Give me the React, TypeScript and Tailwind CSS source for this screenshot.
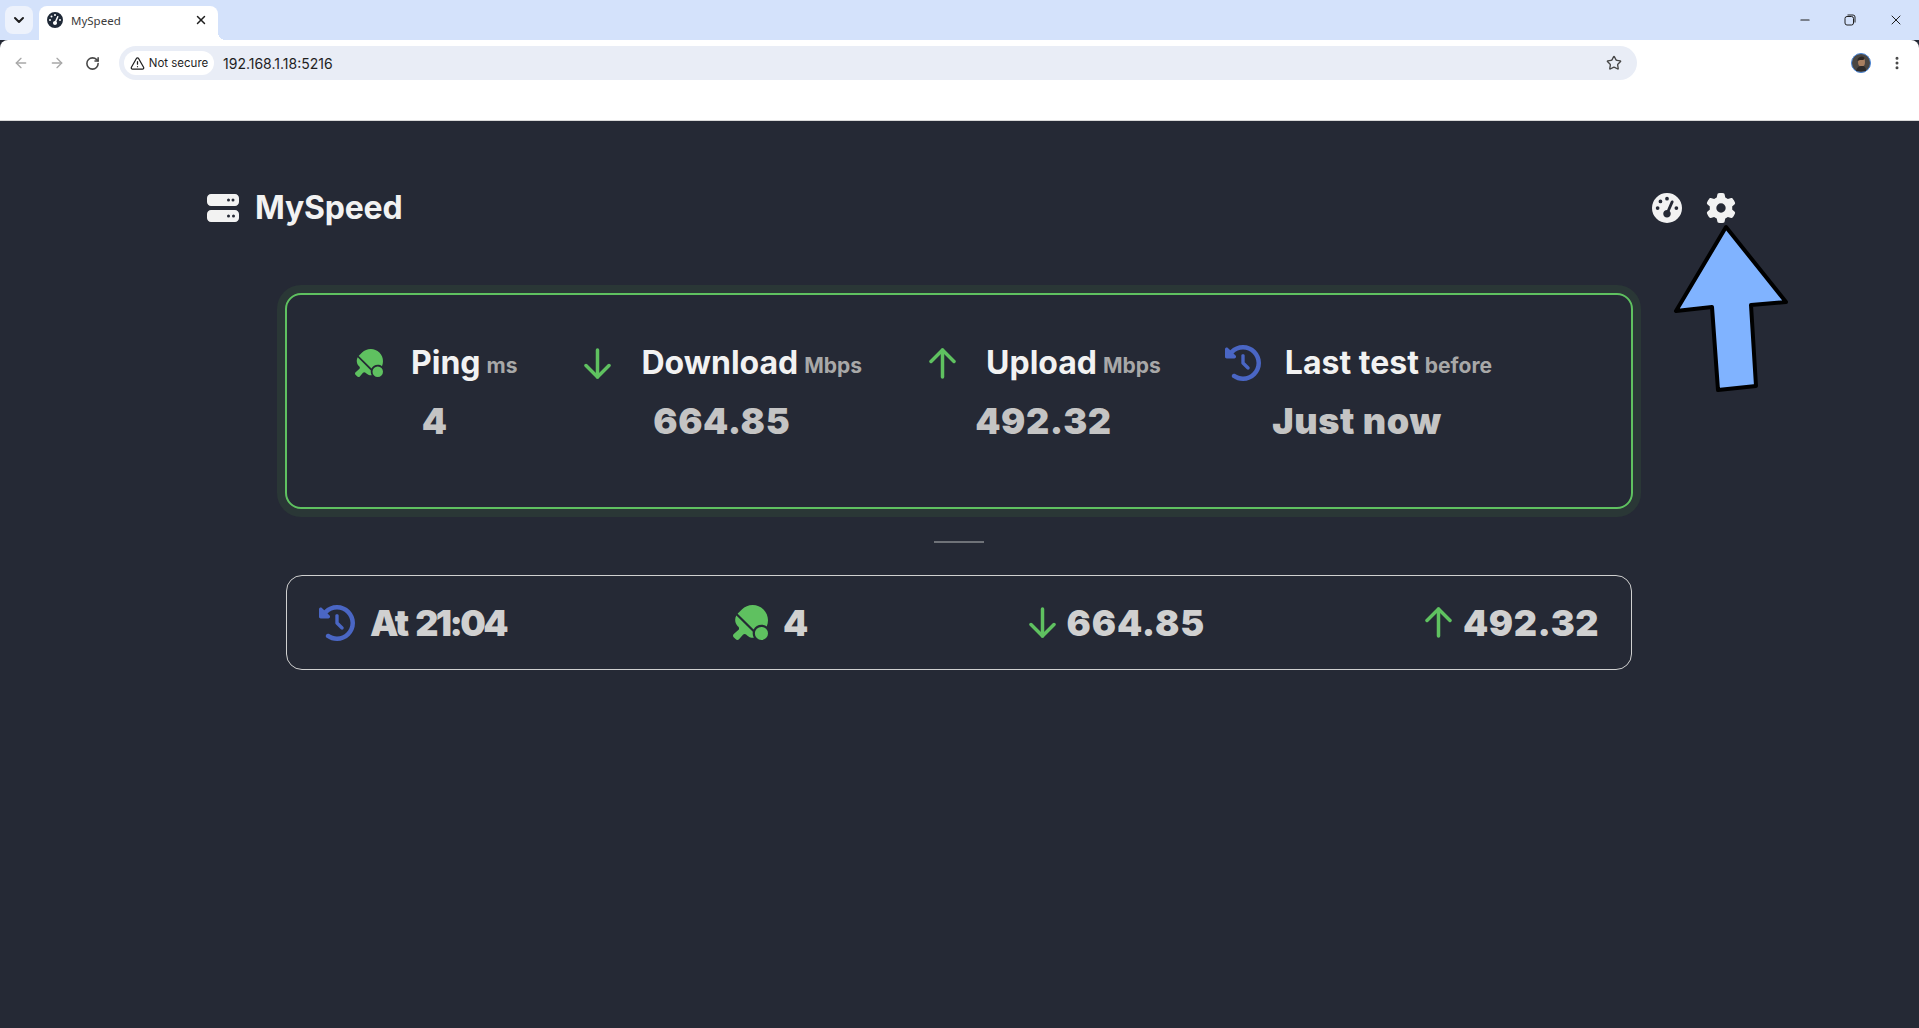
import { ChevronDown, X, ArrowLeft, ArrowRight, RotateCw, TriangleAlert, Star, Minus, EllipsisVertical } from "lucide-react";
import { FaServer, FaGear, FaClockRotateLeft, FaGaugeHigh, FaTableTennisPaddleBall } from "react-icons/fa6";

const stats = [
  { id: "ping", label: "Ping", unit: "ms", value: "4", gap: "ml-[28px]", shift: "" },
  { id: "down", label: "Download", unit: "Mbps", value: "664.85", gap: "ml-[30px]", shift: "" },
  { id: "up", label: "Upload", unit: "Mbps", value: "492.32", gap: "ml-[30px]", shift: "" },
  { id: "last", label: "Last test", unit: "before", value: "Just now", gap: "ml-[24px]", shift: "-ml-[3px]" },
];

function SpeedArrow({ up }: { up?: boolean }) {
  return (
    <svg width="27" height="31" viewBox="0 0 27 31" fill="none" stroke="#5fc160" strokeWidth="3.5" strokeLinecap="round" strokeLinejoin="round" className={up ? "rotate-180" : ""}>
      <path d="M13.5 2V29" />
      <path d="M2 17.5L13.5 29L25 17.5" />
    </svg>
  );
}

function StatIcon({ id, small }: { id: string; small?: boolean }) {
  if (id === "ping") return <FaTableTennisPaddleBall className={small ? "text-[#5fc160] text-[35px]" : "text-[#5fc160] text-[28px]"} />;
  if (id === "down") return <SpeedArrow />;
  if (id === "up") return <SpeedArrow up />;
  return <FaClockRotateLeft className="text-[#4a66c4] text-[36px]" />;
}

export default function App() {
  return (
    <div className="relative w-[1919px] h-[1028px] overflow-hidden bg-[#252935] font-['Inter',sans-serif]">
      {/* Browser chrome */}
      <div className="bg-[#d4e2fb] h-[40px] flex items-start pl-[5px] font-['Noto_Sans',sans-serif]">
        <div className="mt-[6px] w-[28px] h-[28px] rounded-lg bg-[#edf2fc] flex items-center justify-center">
          <ChevronDown size={16} strokeWidth={3} className="text-[#1f1f1f]" />
        </div>
        <div className="relative ml-[6px] mt-[6px] w-[179px] h-[34px] bg-white rounded-t-lg flex items-center pl-[8px] pr-[10px] pb-[6px]">
          <FaGaugeHigh className="text-[#1f2937] text-[16px]" />
          <span className="ml-[8px] mt-[2px] text-[11.5px] text-[#3c3c3c]">MySpeed</span>
          <X size={14} strokeWidth={2.5} className="ml-auto text-[#1f1f1f]" />
          <div className="absolute left-full bottom-0 w-[8px] h-[8px] bg-[radial-gradient(circle_at_100%_0,transparent_8px,white_8px)]" />
        </div>
        <div className="ml-auto flex items-center h-[40px] pr-[15px] gap-[32px] text-[#1f1f1f]">
          <Minus size={14} />
          <svg width="12" height="12" viewBox="0 0 12 12" fill="none" stroke="#1f1f1f" strokeWidth="1">
            <rect x="1" y="2.5" width="8.5" height="8.5" rx="2" />
            <path d="M3.5 1H9a2 2 0 0 1 2 2V8.5" />
          </svg>
          <X size={16} strokeWidth={1.5} />
        </div>
      </div>
      <div className="bg-white h-[81px] rounded-t-lg border-b border-[#d8d8d8]">
        <div className="flex items-center h-[46px]">
          <div className="flex items-center gap-[20px] pl-[13px] w-[119px]">
            <ArrowLeft size={16} className="text-[#a8a8a8]" />
            <ArrowRight size={16} className="text-[#a8a8a8]" />
            <RotateCw size={15} strokeWidth={2.5} className="text-[#474747]" />
          </div>
          <div className="w-[1518px] h-[34px] rounded-full bg-[#e9edf6] flex items-center pl-[5px] pr-[15px]">
            <div className="h-[24px] w-[90px] bg-white rounded-full flex items-center justify-center gap-[4px] text-[#1f1f1f]">
              <TriangleAlert size={15} strokeWidth={2} />
              <span className="mt-[1px] text-[11.5px]">Not secure</span>
            </div>
            <span className="ml-[9px] mt-[1px] text-[14px] text-[#1f1f1f]">192.168.1.18:5216</span>
            <Star size={16} strokeWidth={2} className="ml-auto text-[#474747]" />
          </div>
          <svg width="20" height="20" viewBox="0 0 20 20" className="ml-[214px]">
            <circle cx="10" cy="10" r="9.5" fill="#4a4642" stroke="#4a86d8" />
            <ellipse cx="10.5" cy="9" rx="3.5" ry="4.5" fill="#a87f60" />
            <path d="M6.5 8a4 4 0 0 1 7-3l-1 2H9z" fill="#2c2522" />
            <path d="M5 18c1-4 3-5 6-5s4 2 4 5z" fill="#2c2a2a" />
          </svg>
          <EllipsisVertical size={16} strokeWidth={2.5} className="ml-[18px] text-[#474747]" />
        </div>
      </div>

      {/* Header */}
      <div className="h-[174px] flex items-center justify-between pl-[207px] pr-[183px]">
        <div className="flex items-center gap-[16px] text-[#f2f2f2]">
          <FaServer className="text-[32px]" />
          <span className="text-[32px] font-bold leading-none tracking-[-0.2px]">MySpeed</span>
        </div>
        <div className="flex items-center gap-[24px] text-[#f2f2f2]">
          <FaGaugeHigh className="text-[30px]" />
          <FaGear className="text-[30px]" />
        </div>
      </div>

      <div className="flex flex-col items-center ml-[-1px]">
        {/* Main stat box */}
        <div className="mt-[-2px] w-[1348px] h-[216px] rounded-2xl border-2 border-[#5fc160] shadow-[0_0_0_8px_#2a3736] flex pl-[68px] pt-[48px] gap-[67px]">
          {stats.map((s) => (
            <div key={s.id} className={`${s.shift} flex flex-col items-center`}>
              <div className="flex items-center">
                <StatIcon id={s.id} />
                <span className={`${s.gap} text-[32px] leading-[40px] font-bold text-[#f2f2f2]`}>{s.label}</span>
                <span className="ml-[6px] mt-[6px] text-[21px] leading-[28px] font-bold text-[#a8a8a8]">{s.unit}</span>
              </div>
              <span className="mt-[16px] pr-[3px] text-[36px] leading-[44px] font-black tracking-[0.6px] text-[#c4c4c4]">{s.value}</span>
            </div>
          ))}
        </div>

        {/* Divider */}
        <div className="mt-[32px] w-[50px] h-[2px] bg-[#6f7278]" />

        {/* Latest entry */}
        <div className="mt-[32px] w-[1346px] h-[95px] rounded-2xl border border-[#d0d0d0] flex items-center justify-between px-[32px] text-[36px] font-black tracking-[0.5px] text-[#d0d0d0]">
          <div className="flex items-center gap-[15px]">
            <StatIcon id="last" small />
            <span className="tracking-[-2.6px] [word-spacing:4px]">At 21:04</span>
          </div>
          <div className="ml-[7px] flex items-center gap-[15px]">
            <StatIcon id="ping" small />
            <span>4</span>
          </div>
          <div className="flex items-center gap-[11px]">
            <StatIcon id="down" small />
            <span className="tracking-[0.9px]">664.85</span>
          </div>
          <div className="flex items-center gap-[11px]">
            <StatIcon id="up" small />
            <span>492.32</span>
          </div>
        </div>
      </div>

      {/* Annotation arrow */}
      <svg className="absolute left-0 top-0 pointer-events-none" width="1919" height="1028">
        <polygon
          points="1726,227 1676,311 1712,307 1718,390 1756,386 1751,305 1786,302"
          fill="#80b3ff"
          stroke="#000"
          strokeWidth="4"
          strokeLinejoin="round"
        />
      </svg>
    </div>
  );
}
